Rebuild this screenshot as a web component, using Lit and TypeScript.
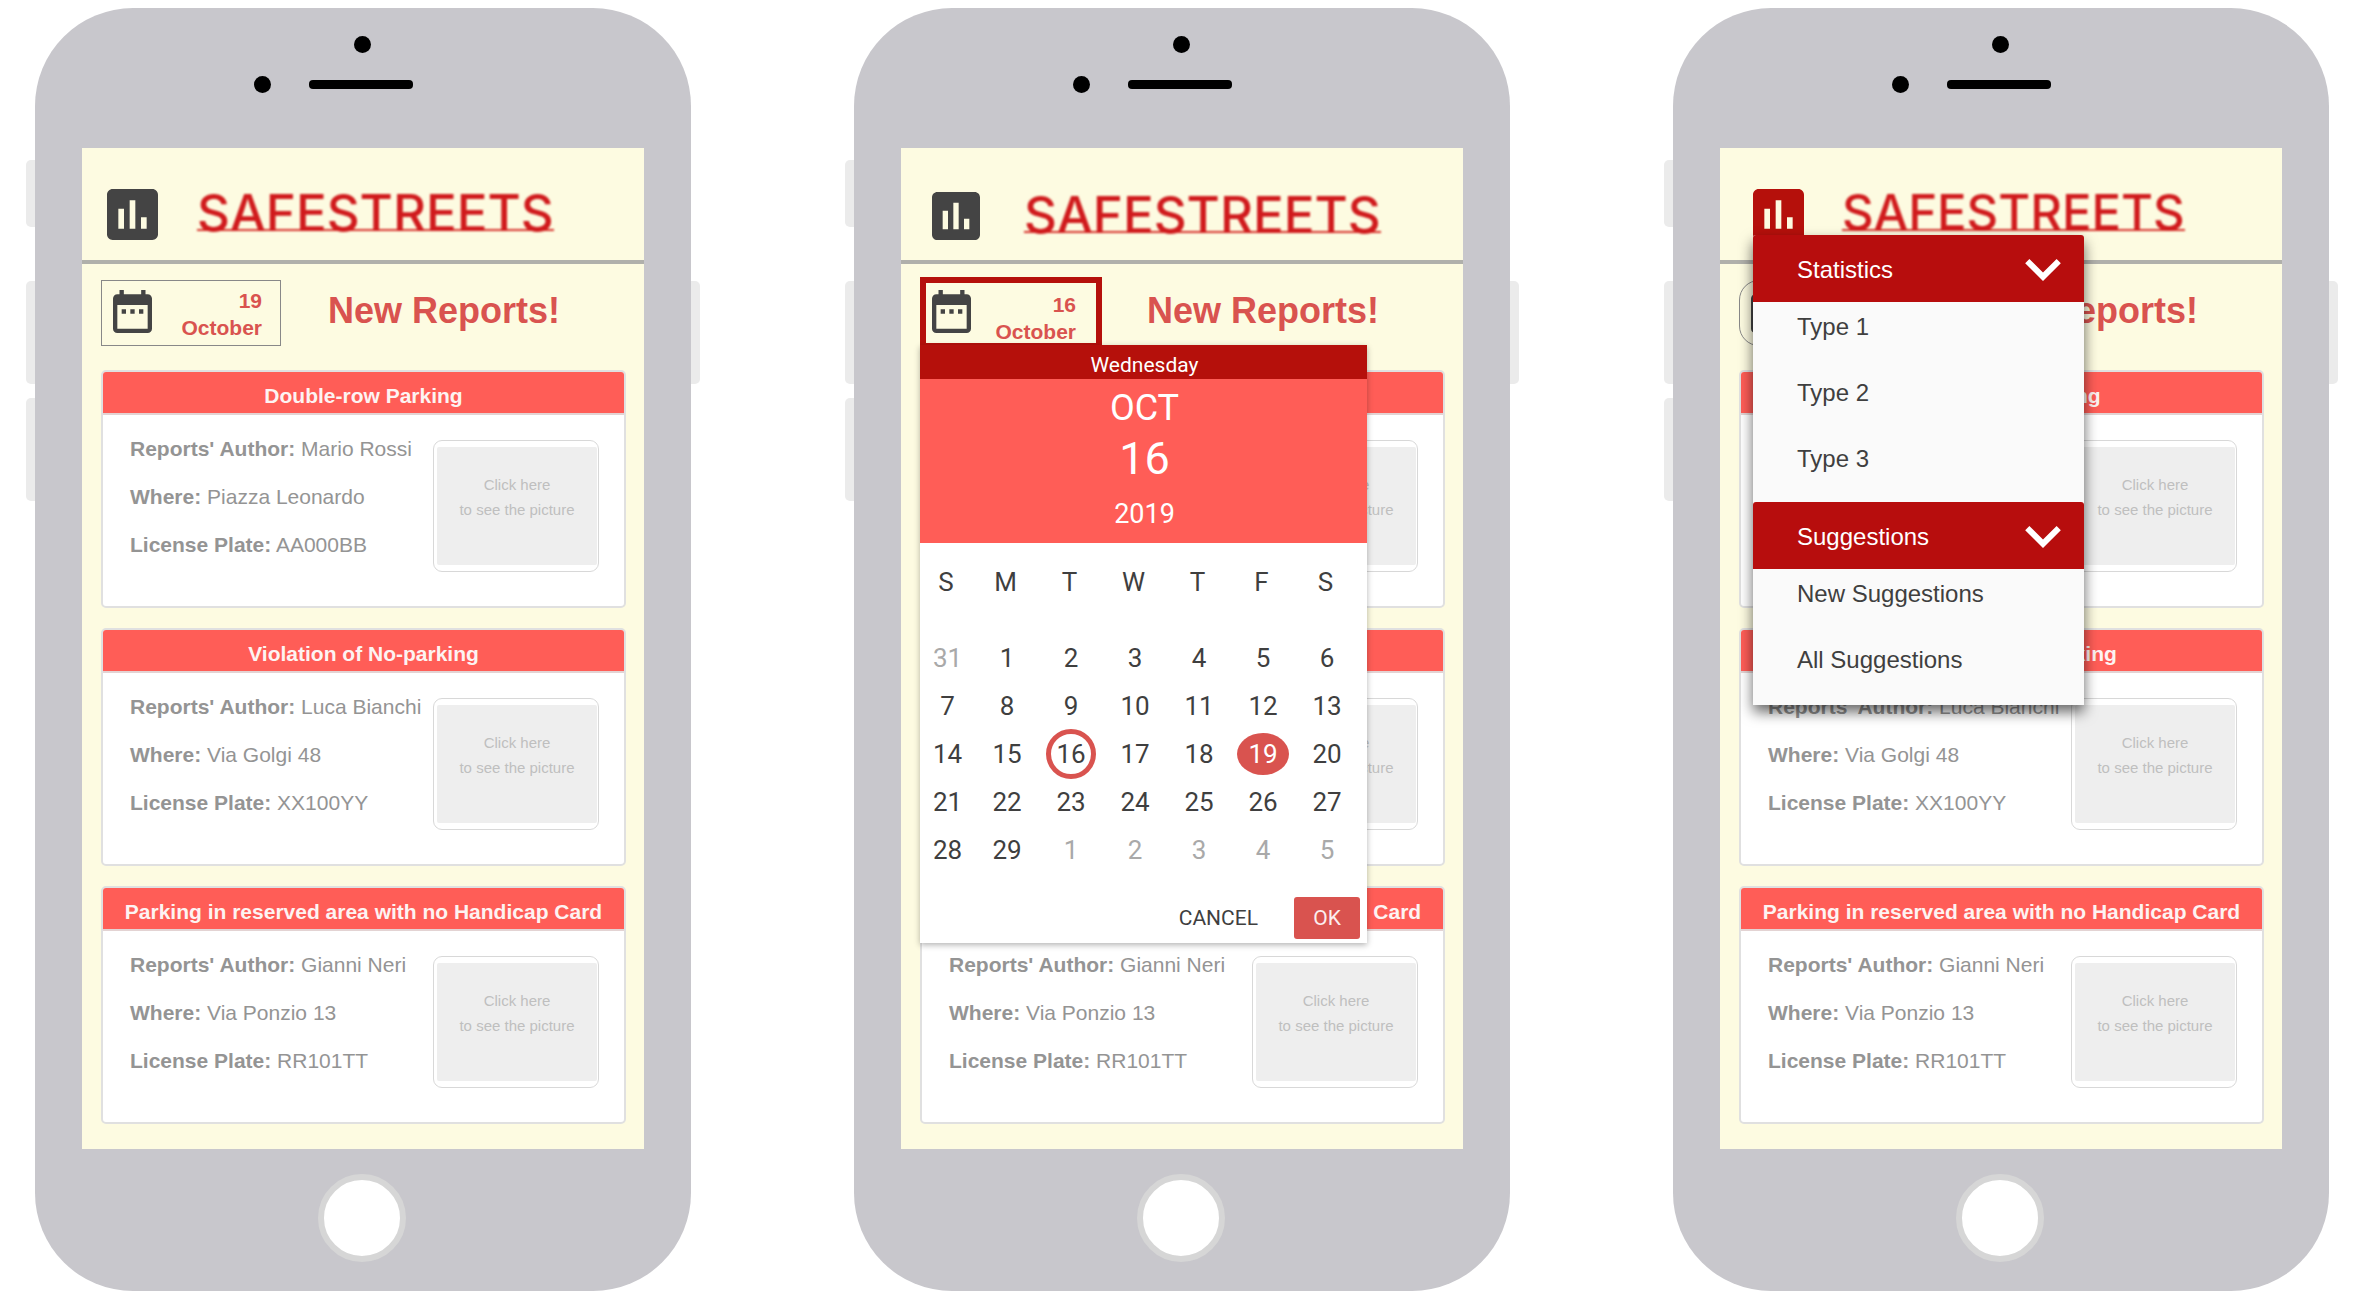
import { LitElement, html, css, svg, nothing } from "lit";
import { customElement, property } from "lit/decorators.js";
import { classMap } from "lit/directives/class-map.js";

type Variant = "list" | "calendar" | "menu";

interface Report {
  title: string;
  author: string;
  where: string;
  plate: string;
}

const REPORTS: Report[] = [
  { title: "Double-row Parking", author: "Mario Rossi", where: "Piazza Leonardo", plate: "AA000BB" },
  { title: "Violation of No-parking", author: "Luca Bianchi", where: "Via Golgi 48", plate: "XX100YY" },
  { title: "Parking in reserved area with no Handicap Card", author: "Gianni Neri", where: "Via Ponzio 13", plate: "RR101TT" },
];

const WEEKDAYS = ["S", "M", "T", "W", "T", "F", "S"];

const WEEKS = [
  [31, 1, 2, 3, 4, 5, 6],
  [7, 8, 9, 10, 11, 12, 13],
  [14, 15, 16, 17, 18, 19, 20],
  [21, 22, 23, 24, 25, 26, 27],
  [28, 29, 1, 2, 3, 4, 5],
];

const MENU = [
  { title: "Statistics", items: ["Type 1", "Type 2", "Type 3"] },
  { title: "Suggestions", items: ["New Suggestions", "All Suggestions"] },
];

const chartIcon = html`<svg class="icon" viewBox="3 3 18 18" aria-hidden="true">
  ${svg`<path fill="currentColor" d="M19 3H5c-1.1 0-2 .9-2 2v14c0 1.1.9 2 2 2h14c1.1 0 2-.9 2-2V5c0-1.1-.9-2-2-2zM9 17H7v-7h2v7zm4 0h-2V7h2v10zm4 0h-2v-4h2v4z"/>`}
</svg>`;

const calendarIcon = html`<svg class="cal-icon" viewBox="3 2 18 20" preserveAspectRatio="none" aria-hidden="true">
  ${svg`<path fill="currentColor" d="M9 11H7v2h2v-2zm4 0h-2v2h2v-2zm4 0h-2v2h2v-2zm2-7h-1V2h-2v2H8V2H6v2H5c-1.11 0-1.99.9-1.99 2L3 20c0 1.1.89 2 2 2h14c1.1 0 2-.9 2-2V6c0-1.1-.9-2-2-2zm0 16H5V9h14v11z"/>`}
</svg>`;

const chevronIcon = html`<svg class="chevron" viewBox="6 8.59 12 7.41" aria-hidden="true">
  ${svg`<path fill="currentColor" d="M16.59 8.59 12 13.17 7.41 8.59 6 10l6 6 6-6z"/>`}
</svg>`;

const reset = css`
  * {
    box-sizing: border-box;
  }
  button {
    font: inherit;
    color: inherit;
    background: none;
    border: 0;
    padding: 0;
    margin: 0;
    cursor: pointer;
  }
  h1,
  h2,
  h3,
  p,
  ul {
    margin: 0;
    padding: 0;
  }
`;

@customElement("report-card")
class ReportCard extends LitElement {
  @property({ attribute: false }) report!: Report;

  static styles = [
    reset,
    css`
      :host {
        display: block;
        border: 2px solid #e0e0e0;
        border-radius: 5px;
        background: #fff;
        overflow: hidden;
      }
      .title {
        padding-top: 6px;
        border-bottom: 2px solid #e3d3d3;
        background: #ff5d57;
        color: #fdf3f2;
        font-size: 21px;
        line-height: 35px;
        font-weight: 700;
        text-align: center;
        white-space: nowrap;
      }
      .body {
        display: flex;
        justify-content: space-between;
        align-items: flex-start;
        padding: 10px 25px 34px 27px;
      }
      .facts {
        color: #949494;
        font-size: 21px;
        line-height: 48px;
        white-space: nowrap;
      }
      .picture {
        flex: none;
        width: 166px;
        height: 132px;
        margin-top: 15px;
        padding: 6px 1px 6px 3px;
        border: 1px solid #d8d8d8;
        border-radius: 9px;
      }
      .placeholder {
        display: block;
        height: 100%;
        padding-top: 25px;
        border-radius: 2px;
        background: #eee;
        color: #bfbfbf;
        font-size: 15px;
        line-height: 25px;
      }
    `,
  ];

  render() {
    const r = this.report;
    return html`
      <h3 class="title">${r.title}</h3>
      <div class="body">
        <div class="facts">
          <p><b>Reports' Author:</b> ${r.author}</p>
          <p><b>Where:</b> ${r.where}</p>
          <p><b>License Plate:</b> ${r.plate}</p>
        </div>
        <button class="picture" type="button">
          <span class="placeholder">Click here<br />to see the picture</span>
        </button>
      </div>
    `;
  }
}

@customElement("date-picker")
class DatePicker extends LitElement {
  static styles = [
    reset,
    css`
      :host {
        display: block;
        background: #fff;
        box-shadow: 0 2px 6px rgba(0, 0, 0, 0.3);
        font-family: Roboto, "Liberation Sans", sans-serif;
        color: #3f3f3f;
      }
      .weekday {
        padding: 6px 0 0 2px;
        background: #b5100b;
        color: #fff;
        font-size: 21px;
        line-height: 28px;
        text-align: center;
      }
      .summary {
        padding: 9px 0 5px 2px;
        background: #ff5d57;
        color: #fff;
        text-align: center;
      }
      .month {
        font-size: 36px;
        line-height: 40px;
      }
      .day-number {
        font-size: 45px;
        line-height: 62px;
      }
      .year {
        font-size: 27px;
        line-height: 48px;
      }
      .grid {
        padding-right: 8px;
      }
      table {
        width: 100%;
        table-layout: fixed;
        border-collapse: collapse;
        font-size: 26px;
        line-height: 48px;
        text-align: center;
      }
      .first {
        width: 55px;
      }
      th {
        padding: 15px 3px 28px 0;
        font-weight: 400;
      }
      td {
        height: 48px;
        padding: 0;
      }
      .day {
        display: block;
        width: 50px;
        height: 48px;
        margin: 0 auto;
      }
      .outside {
        color: #a9a9a9;
      }
      .chosen {
        height: 50px;
        margin: -1px auto;
        border: 5px solid #d9534f;
        border-radius: 50%;
        line-height: 40px;
      }
      .today {
        width: 52px;
        height: 42px;
        border-radius: 50%;
        background: #d9534f;
        color: #fff;
        line-height: 40px;
      }
      .actions {
        display: flex;
        justify-content: flex-end;
        align-items: center;
        gap: 36px;
        padding: 23px 7px 4px;
        font-size: 21px;
        line-height: 42px;
      }
      .ok {
        width: 66px;
        border-radius: 3px;
        background: #d9534f;
        color: #fbeeee;
      }
    `,
  ];

  render() {
    return html`
      <p class="weekday">Wednesday</p>
      <div class="summary">
        <p class="month">OCT</p>
        <p class="day-number">16</p>
        <p class="year">2019</p>
      </div>
      <div class="grid">
        <table>
          <thead>
            <tr>
              ${WEEKDAYS.map((d, i) => html`<th scope="col" class=${i === 0 ? "first" : ""}>${d}</th>`)}
            </tr>
          </thead>
          <tbody>
            ${WEEKS.map(
              (week, row) => html`<tr>
                ${week.map((d) => {
                  const outside = (row === 0 && d > 7) || (row === 4 && d < 7);
                  const cls = classMap({
                    day: true,
                    outside,
                    chosen: d === 16,
                    today: d === 19,
                  });
                  return html`<td><button class=${cls} type="button">${d}</button></td>`;
                })}
              </tr>`
            )}
          </tbody>
        </table>
      </div>
      <div class="actions">
        <button type="button">CANCEL</button>
        <button class="ok" type="button">OK</button>
      </div>
    `;
  }
}

@customElement("side-menu")
class SideMenu extends LitElement {
  static styles = [
    reset,
    css`
      :host {
        display: block;
        padding-bottom: 2px;
        border-radius: 3px 3px 0 0;
        background: #fafafa;
        box-shadow: 0 7px 14px rgba(0, 0, 0, 0.6);
        color: #3f3f3f;
        font-size: 24px;
      }
      .heading {
        display: flex;
        justify-content: space-between;
        align-items: center;
        width: 100%;
        padding: 2px 23px 0 44px;
        border-radius: 3px 3px 0 0;
        background: #b70d0d;
        color: #fff;
        line-height: 65px;
      }
      .chevron {
        width: 36px;
        height: 22px;
      }
      .items {
        display: flex;
        flex-direction: column;
        gap: 16px;
        padding: 0 20px 18px 44px;
        list-style: none;
      }
      .link {
        display: block;
        color: inherit;
        text-decoration: none;
        line-height: 50px;
      }
    `,
  ];

  render() {
    return MENU.map(
      (section) => html`
        <button class="heading" type="button"><span>${section.title}</span>${chevronIcon}</button>
        <ul class="items">
          ${section.items.map((item) => html`<li><a class="link" href="#">${item}</a></li>`)}
        </ul>
      `
    );
  }
}

@customElement("phone-mockup")
class PhoneMockup extends LitElement {
  @property() variant: Variant = "list";
  @property() day = "19";

  static styles = [
    reset,
    css`
      :host {
        display: block;
        min-width: 0;
      }
      .phone {
        position: relative;
        display: flex;
        flex-direction: column;
        padding: 0 47px;
        border-radius: 98px;
        background: #c8c7cc;
      }
      .key {
        position: absolute;
        width: 9px;
        background: #ebebeb;
      }
      .left {
        right: 100%;
        border-radius: 5px 0 0 5px;
      }
      .right {
        left: 100%;
        border-radius: 0 5px 5px 0;
      }
      .mute {
        top: 152px;
        height: 67px;
      }
      .upper {
        top: 273px;
        height: 103px;
      }
      .lower {
        top: 390px;
        height: 103px;
      }
      .top {
        display: flex;
        flex-direction: column;
        align-items: center;
        gap: 23px;
        height: 140px;
        padding: 28px 2px 0 0;
      }
      .lens {
        width: 17px;
        height: 17px;
        border-radius: 50%;
        background: #000;
      }
      .ear {
        display: grid;
        grid-template-columns: 17px 104px 17px;
        gap: 38px;
        align-items: center;
        padding-right: 3px;
      }
      .speaker {
        height: 9px;
        border-radius: 4px;
        background: #000;
      }
      .bottom {
        display: flex;
        justify-content: center;
        padding: 25px 3px 29px 0;
      }
      .home {
        width: 88px;
        height: 88px;
        border: 6px solid #d6d6d6;
        border-radius: 50%;
        background: #fff;
      }
      .screen {
        position: relative;
        background: #fdfbe1;
      }
      .header {
        display: flex;
        align-items: center;
        gap: 39px;
        height: 116px;
        padding: 20px 0 0 25px;
        border-bottom: 4px solid #b0b0ab;
      }
      .stats {
        width: 51px;
        height: 51px;
        color: #444;
      }
      .icon {
        display: block;
        width: 100%;
        height: 100%;
      }
      .logo {
        border-bottom: 2px solid #d8332c;
        color: #d01a1c;
        font-family: Inter, "Liberation Sans", sans-serif;
        font-size: 51px;
        font-weight: 500;
        line-height: 32px;
        filter: blur(1px);
      }
      .toolbar {
        display: grid;
        grid-template-columns: 182px 1fr;
        gap: 45px;
        align-items: start;
        padding: 16px 19px 24px;
      }
      .date {
        display: flex;
        justify-content: space-between;
        align-items: flex-start;
        width: 180px;
        height: 66px;
        padding: 6px 18px 0 11px;
        border: 1px solid #888;
        color: #d9534f;
        font-size: 21px;
        font-weight: 700;
        line-height: 27px;
        text-align: right;
      }
      .cal-icon {
        width: 39px;
        height: 43px;
        margin-top: 3px;
        color: #444;
      }
      .date-text {
        width: 90px;
      }
      .heading {
        color: #d9534f;
        font-size: 36px;
        font-weight: 700;
        line-height: 62px;
        white-space: nowrap;
      }
      .cards {
        display: grid;
        gap: 20px;
        padding: 0 18px 25px 19px;
      }
      .picker {
        position: absolute;
        top: 197px;
        left: 19px;
        right: 96px;
      }
      .menu {
        position: absolute;
        top: 87px;
        left: 33px;
        right: 198px;
      }
      .toolbar {
        height: 106px;
      }
      .calendar .header {
        gap: 44px;
        padding: 24px 0 0 31px;
      }
      .calendar .stats {
        width: 48px;
        height: 48px;
      }
      .calendar .date {
        width: 182px;
        height: 72px;
        margin: -3px 0;
        padding: 4px 20px 0 6px;
        border: 6px solid #b5100b;
      }
      .calendar .date-text {
        padding-top: 4px;
      }
      .menu-open .header {
        gap: 38px;
        padding-left: 33px;
      }
      .menu-open .stats {
        color: #b5100b;
      }
      .menu-open .logo {
        font-size: 49px;
      }
      .menu-open .date {
        border-radius: 20px;
      }
    `,
  ];

  render() {
    const screen = classMap({
      screen: true,
      calendar: this.variant === "calendar",
      "menu-open": this.variant === "menu",
    });
    return html`
      <div class="phone">
        <span class="key left mute"></span>
        <span class="key left upper"></span>
        <span class="key left lower"></span>
        <span class="key right upper"></span>
        <div class="top">
          <span class="lens"></span>
          <div class="ear"><span class="lens"></span><span class="speaker"></span></div>
        </div>
        <div class=${screen}>
          <header class="header">
            <button class="stats" type="button" aria-label="Statistics">${chartIcon}</button>
            <h1 class="logo">SAFESTREETS</h1>
          </header>
          <div class="toolbar">
            <button class="date" type="button">
              ${calendarIcon}
              <span class="date-text">${this.day}<br />October</span>
            </button>
            <h2 class="heading">New Reports!</h2>
          </div>
          <div class="cards">
            ${REPORTS.map((r) => html`<report-card .report=${r}></report-card>`)}
          </div>
          ${this.variant === "calendar" ? html`<date-picker class="picker"></date-picker>` : nothing}
          ${this.variant === "menu" ? html`<side-menu class="menu"></side-menu>` : nothing}
        </div>
        <div class="bottom"><button class="home" type="button" aria-label="Home"></button></div>
      </div>
    `;
  }
}

@customElement("app-root")
class AppRoot extends LitElement {
  static styles = css`
    :host {
      display: block;
      background: #fff;
      font-family: "Liberation Sans", Arial, sans-serif;
    }
    .page {
      display: grid;
      grid-template-columns: repeat(3, 1fr);
      gap: 163px;
      padding: 8px 47px 10px 35px;
    }
  `;

  render() {
    return html`
      <main class="page">
        <phone-mockup variant="list" day="19"></phone-mockup>
        <phone-mockup variant="calendar" day="16"></phone-mockup>
        <phone-mockup variant="menu" day="19"></phone-mockup>
      </main>
    `;
  }
}
